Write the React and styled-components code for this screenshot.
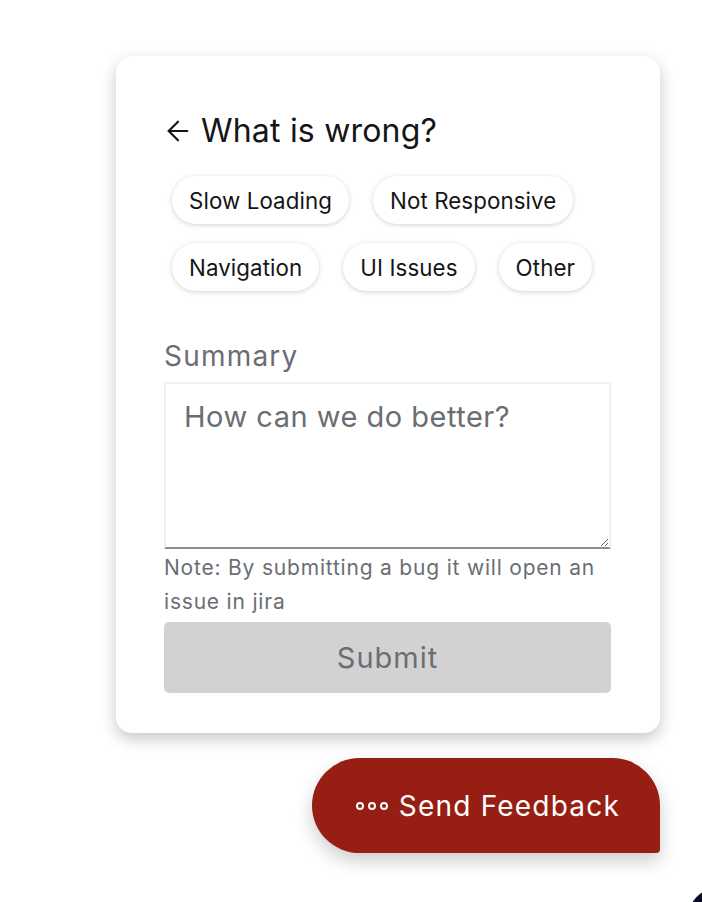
import React from 'react';
import styled, { createGlobalStyle } from 'styled-components';
import { ArrowLeft } from 'lucide-react';

const GlobalStyle = createGlobalStyle`
  html, body {
    margin: 0;
    padding: 0;
    background: #ffffff;
  }
  body {
    font-family: Inter, "Open Sans", "Liberation Sans", sans-serif;
    overflow: hidden;
  }
`;

const Page = styled.div`
  position: relative;
  width: 702px;
  height: 902px;
  overflow: hidden;
  box-sizing: border-box;
  padding: 56px 42px 0 0;
  display: flex;
  flex-direction: column;
  align-items: flex-end;
  gap: 25px;
`;

const Card = styled.div`
  width: 544px;
  box-sizing: border-box;
  padding: 55px 49px 40px 48px;
  background: #ffffff;
  border-radius: 16px;
  box-shadow: 0 6px 16px rgba(0, 0, 0, 0.22);
`;

const Heading = styled.h2`
  display: flex;
  align-items: center;
  gap: 7px;
  margin: 0 0 25px;
  font-size: 32px;
  line-height: 40px;
  font-weight: 400;
  color: #151515;
  letter-spacing: 0.2px;

  svg {
    margin-left: -2px;
  }
`;

const ChipList = styled.div`
  display: flex;
  flex-wrap: wrap;
  gap: 19px 24px;
  padding-left: 8px;
  margin-bottom: 48px;
`;

const Chip = styled.button`
  height: 48px;
  padding: 0 17px;
  border: none;
  border-radius: 24px;
  background: #ffffff;
  box-shadow: 0 1px 5px rgba(0, 0, 0, 0.18);
  font-family: inherit;
  font-size: 22.3px;
  letter-spacing: 0.1px;
  color: #151515;
  cursor: pointer;
`;

const Label = styled.label`
  display: block;
  font-size: 28px;
  line-height: 34px;
  letter-spacing: 1.2px;
  color: #6a6e73;
  margin-bottom: 9px;
`;

const TextArea = styled.textarea`
  display: block;
  width: 100%;
  height: 167px;
  box-sizing: border-box;
  padding: 15px 18px;
  border: 2px solid #f0f0f0;
  border-bottom: 2px solid #8a8d90;
  resize: vertical;
  font-family: inherit;
  font-size: 29px;
  letter-spacing: 0.5px;
  color: #151515;
  outline: none;

  &::placeholder {
    color: #6a6e73;
  }
`;

const Note = styled.p`
  margin: 2px 0 3px;
  font-size: 21px;
  line-height: 34px;
  letter-spacing: 0.8px;
  color: #6a6e73;
`;

const SubmitButton = styled.button`
  width: 100%;
  height: 71px;
  border: none;
  border-radius: 5px;
  background: #d2d2d2;
  color: #6a6e73;
  font-family: inherit;
  font-size: 29px;
  letter-spacing: 1px;
  cursor: default;
`;

const FeedbackButton = styled.button`
  display: flex;
  align-items: center;
  gap: 11px;
  height: 95px;
  padding: 0 40px 0 44px;
  border: none;
  border-radius: 48px 48px 4px 48px;
  background: #971e13;
  color: #ffffff;
  font-family: inherit;
  font-size: 28px;
  letter-spacing: 1.2px;
  box-shadow: 0 8px 18px rgba(0, 0, 0, 0.2);
  cursor: pointer;
`;

const Dots = styled.span`
  display: flex;
  gap: 4px;

  i {
    width: 4px;
    height: 4px;
    border: 2px solid #ffffff;
    border-radius: 50%;
  }
`;

const CornerBlob = styled.div`
  position: absolute;
  left: 688px;
  top: 888px;
  width: 60px;
  height: 60px;
  border-radius: 50%;
  background: #0b0b24;
`;

const issues = ['Slow Loading', 'Not Responsive', 'Navigation', 'UI Issues', 'Other'];

export default function App() {
  return (
    <>
      <GlobalStyle />
      <Page>
        <Card>
          <Heading>
            <ArrowLeft size={32} strokeWidth={1.6} />
            What is wrong?
          </Heading>
          <ChipList>
            {issues.map((issue) => (
              <Chip key={issue}>{issue}</Chip>
            ))}
          </ChipList>
          <Label htmlFor="summary">Summary</Label>
          <TextArea id="summary" placeholder="How can we do better?" />
          <Note>Note: By submitting a bug it will open an issue in jira</Note>
          <SubmitButton disabled>Submit</SubmitButton>
        </Card>
        <FeedbackButton>
          <Dots>
            <i />
            <i />
            <i />
          </Dots>
          Send Feedback
        </FeedbackButton>
        <CornerBlob />
      </Page>
    </>
  );
}
